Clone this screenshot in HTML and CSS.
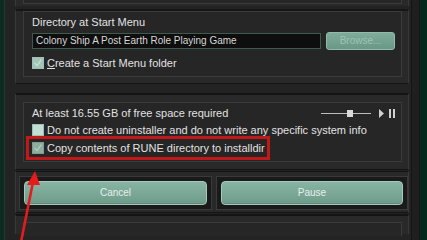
FILE: index.html
```html
<!DOCTYPE html>
<html>
<head>
<meta charset="utf-8">
<link rel="stylesheet" href="styles.css">
</head>
<body>
  <div class="edge-left"></div>
  <div class="column">
    <div class="frame frame-a"><div class="group group-a"></div></div>

    <div class="frame frame-b">
      <div class="group group-b">
        <div class="label">Directory at Start Menu</div>
        <div class="input-row">
          <div class="input">Colony Ship A Post Earth Role Playing Game</div>
          <div class="browse">Browse...</div>
        </div>
        <div class="check-row row-start">
          <span class="cb checked">
            <svg viewBox="0 0 12 12" width="10" height="10"><polyline points="2,6 5,9 10,2" fill="none" stroke="#c9e0d7" stroke-width="1.5"/></svg>
          </span>
          <span><u>C</u>reate a Start Menu folder</span>
        </div>
      </div>
    </div>

    <div class="frame frame-c">
      <div class="group group-c">
        <div class="info-row">
          <span>At least 16.55 GB of free space required</span>
          <div class="player">
            <span class="track t1"></span><span class="knob"></span><span class="track t2"></span>
            <svg class="play" viewBox="0 0 5 9" width="5" height="9"><polygon points="0,0 5,4.5 0,9" fill="#d0d0d0"/></svg>
            <span class="bars"><span></span><span></span></span>
          </div>
        </div>
        <div class="check-row row-uninst">
          <span class="cb"></span>
          <span>Do not create uninstaller and do not write any specific system info</span>
        </div>
        <div class="check-row row-copy">
          <span class="cb checked faded">
            <svg viewBox="0 0 12 12" width="10" height="10"><polyline points="2,6 5,9 10,2" fill="none" stroke="#b4cbc1" stroke-width="1.5"/></svg>
          </span>
          <span>Copy contents of RUNE directory to installdir</span>
        </div>
      </div>
    </div>

    <div class="frame frame-d">
      <div class="well"><div class="btn">Cancel</div></div>
      <div class="well"><div class="btn">Pause</div></div>
    </div>

    <div class="frame frame-e"><div class="group group-e"></div></div>
  </div>
  <div class="gutter"></div>
  <div class="edge-right"></div>

  <svg class="arrow" width="427" height="240" viewBox="0 0 427 240">
    <line x1="21" y1="242" x2="33" y2="182" stroke="#e41c1c" stroke-width="2.6"/>
    <polygon points="35,171 27,185 40,185" fill="#e41c1c"/>
  </svg>
</body>
</html>
```

FILE: styles.css
```css
* { box-sizing: border-box; }
html, body { margin: 0; height: 240px; overflow: hidden; }
body {
  width: 427px;
  display: flex;
  position: relative;
  background: #1f1f1f;
  font-family: "Liberation Sans", Arial, sans-serif;
  font-size: 11px;
  color: #e2e2e2;
}
.edge-left { width: 5px; flex: none; background: #0f2a20; border-right: 1px solid #1c3a2e; }
.column { width: 407px; flex: none; background: #232323; padding: 0 2px 0 10px; border-right: 1px solid #141414; }
.gutter { width: 8px; flex: none; background: #1f1f1f; border-right: 1px solid #151515; }
.edge-right { width: 7px; flex: none; background: #052a1c; }

.frame {
  background: #292929;
  border-left: 1px solid #393939;
  border-right: 1px solid #393939;
  padding: 0 6px 0 7px;
}
.group { border: 1px solid #3b3b3b; background: #262626; padding: 3px 6px 6px 8px; }

.frame-a { height: 6px; padding-bottom: 2px; }
.group-a { height: 4px; border-top: none; padding: 0; }

.frame-b { margin-top: 3px; border-top: 2px solid #161616; padding-bottom: 6px; border-bottom: 1px solid #151515; }
.frame-c { margin-top: 9px; border-top: 2px solid #141414; padding-top: 7px; padding-bottom: 7px; border-bottom: 1px solid #151515; }
.frame-d {
  margin-top: 1px;
  border-top: 1px solid #141414;
  border-bottom: 1px solid #141414;
  padding: 4px 1px 2px 3px;
  display: grid;
  grid-template-columns: 193px 192px;
  column-gap: 4px;
}
.frame-e { margin-top: 1px; border-top: 2px solid #141414; padding-top: 6px; height: 20px; }
.group-e { height: 14px; border-bottom: none; }

.label { line-height: 14px; height: 14px; }
.input-row { display: flex; align-items: center; margin-top: 3px; height: 18px; }
.input {
  width: 289px; height: 16px;
  background: #0e0e0e;
  border: 1px solid #3d5a4e;
  color: #d6d6d6;
  font-size: 10px;
  line-height: 14px;
  padding-left: 3px;
  white-space: nowrap;
  overflow: hidden;
}
.browse {
  margin-left: 5px;
  width: 69px; height: 18px;
  border-radius: 3px;
  background: linear-gradient(#7eab9a, #6a9887);
  border: 1px solid #93bbac;
  color: #9ec2b4;
  font-size: 10px;
  line-height: 16px;
  text-align: center;
}

.check-row { display: flex; align-items: center; height: 14px; line-height: 14px; white-space: nowrap; }
.row-start { margin-top: 6px; }
.row-uninst { margin-top: 3px; }
.row-copy {
  margin-top: 4px;
  width: 234px;
  margin-left: -1px;
  padding-left: 1px;
  outline: 3px solid #c21818;
  outline-offset: 2px;
}
.cb {
  width: 12px; height: 12px; flex: none;
  margin-right: 3px;
  background: #c3ded4;
  border: 1px solid #9fbfb3;
  display: flex; align-items: center; justify-content: center;
}
.cb.checked { background: #a3c4b7; }
.cb.faded { background: #8fad9f; border-color: #7f9d90; }
.cb svg { display: block; }

.info-row { display: flex; justify-content: space-between; align-items: center; height: 14px; line-height: 14px; }
.player { display: flex; align-items: center; height: 14px; }
.track { height: 1px; background: #bdbdbd; }
.t1 { width: 26px; }
.t2 { width: 18px; }
.knob { width: 6px; height: 7px; background: #d8d8d8; }
.play { margin-left: 8px; display: block; }
.bars { display: flex; gap: 2px; margin-left: 5px; }
.bars span { width: 2px; height: 9px; background: #d0d0d0; }

.well { height: 34px; border: 1px solid #3a3a3a; background: #1a1a1a; padding: 4px; }
.btn {
  height: 24px;
  border-radius: 4px;
  background: linear-gradient(#88b4a4, #6e9b8a);
  border: 1px solid #a6c9bb;
  box-shadow: inset 0 -1px 0 #5f8a7a;
  color: #e6efeb;
  font-size: 10px;
  line-height: 22px;
  text-align: center;
}

.arrow { position: absolute; left: 0; top: 0; pointer-events: none; }
```
